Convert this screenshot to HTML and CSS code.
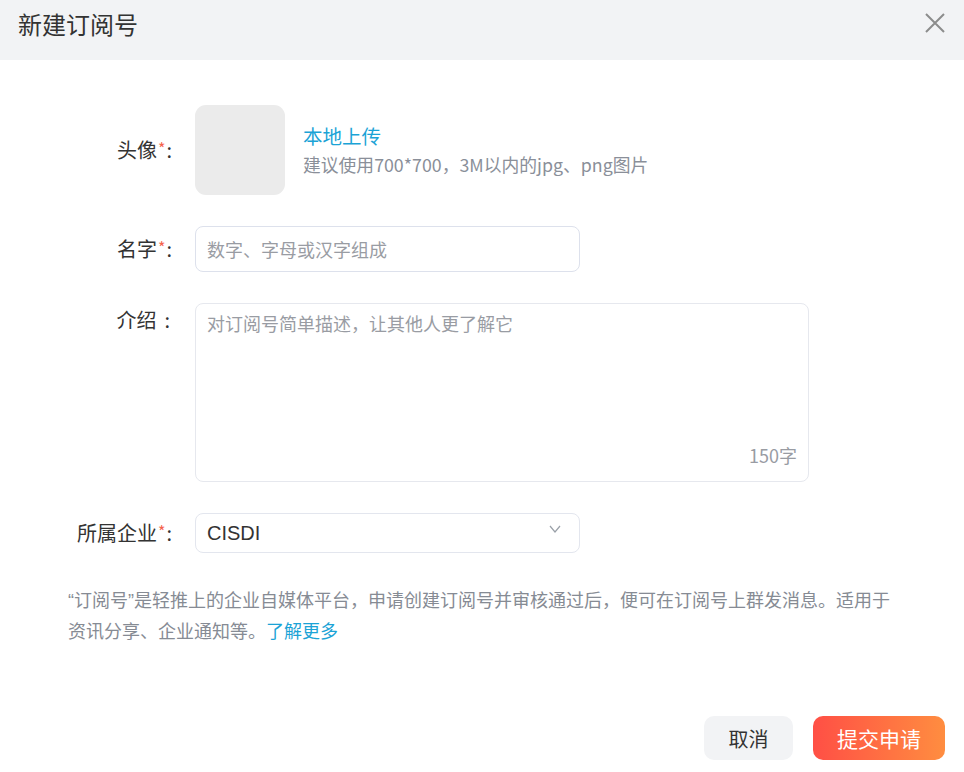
FILE: index.html
```html
<!DOCTYPE html>
<html lang="zh-CN">
<head>
<meta charset="utf-8">
<title>新建订阅号</title>
<link rel="stylesheet" href="styles.css">
</head>
<body>
<div class="dialog">
  <div class="header">
    <div class="title">新建订阅号</div>
    <button class="close" aria-label="关闭">
      <svg width="20" height="20" viewBox="0 0 20 20"><path d="M1 1 L19 19 M19 1 L1 19" stroke="#8c8c8c" stroke-width="2" fill="none"/></svg>
    </button>
  </div>
  <div class="body">
    <div class="row row-center">
      <div class="label">头像<span class="req">*</span>:</div>
      <div class="field avatar-field">
        <div class="avatar"></div>
        <div class="upload">
          <a class="link upload-link">本地上传</a>
          <div class="hint">建议使用700*700，3M以内的jpg、png图片</div>
        </div>
      </div>
    </div>
    <div class="row row-center">
      <div class="label">名字<span class="req">*</span>:</div>
      <div class="field">
        <div class="input name-input"><span class="placeholder">数字、字母或汉字组成</span></div>
      </div>
    </div>
    <div class="row row-top">
      <div class="label label-top">介绍<span class="colon">:</span></div>
      <div class="field">
        <div class="textarea">
          <span class="placeholder">对订阅号简单描述，让其他人更了解它</span>
          <span class="count">150字</span>
        </div>
      </div>
    </div>
    <div class="row row-center">
      <div class="label">所属企业<span class="req">*</span>:</div>
      <div class="field">
        <div class="select">
          <span class="value">CISDI</span>
          <svg width="12" height="8" viewBox="0 0 12 8"><path d="M1 1 L6 7 L11 1" stroke="#9aa0a8" stroke-width="1.2" fill="none"/></svg>
        </div>
      </div>
    </div>
    <p class="info">“订阅号”是轻推上的企业自媒体平台，申请创建订阅号并审核通过后，便可在订阅号上群发消息。适用于资讯分享、企业通知等。<a class="link">了解更多</a></p>
  </div>
  <div class="footer">
    <button class="btn btn-cancel">取消</button>
    <button class="btn btn-submit">提交申请</button>
  </div>
</div>
</body>
</html>
```
FILE: styles.css
```css
* { box-sizing: border-box; }
html, body { margin: 0; padding: 0; background: #fff; }
body {
  font-family: "Noto Sans CJK SC", "Liberation Sans", sans-serif;
  color: #333;
  width: 964px;
  height: 772px;
  overflow: hidden;
}
.dialog { width: 964px; }
.header {
  height: 60px;
  background: #f2f3f5;
  display: flex;
  align-items: center;
  justify-content: space-between;
  padding: 0 19px 0 18px;
}
.title { font-size: 24px; color: #333; margin-top: -12px; line-height: 32px; }
.close {
  border: 0; background: none; padding: 0; width: 20px; height: 20px;
  margin-top: -15px; cursor: pointer; display: flex;
}
.body { padding: 45px 0 0 0; }
.row {
  display: grid;
  grid-template-columns: 172px auto;
  column-gap: 23px;
  margin-bottom: 31px;
}
.row-center { align-items: center; }
.row-top { align-items: start; }
.label {
  text-align: right;
  font-size: 20px;
  color: #333;
  line-height: 26px;
}
.label-top { padding-top: 4px; }
.colon { margin-left: 8px; margin-right: 2px; }
.req { color: #f5624d; font-size: 16px; position: relative; top: -3px; margin: 0 1px 0 1px; }
.field { display: flex; }
.avatar-field { align-items: center; gap: 18px; }
.avatar {
  width: 90px; height: 90px; border-radius: 11px; background: #ebebeb;
}
.upload { display: flex; flex-direction: column; margin-top: 2px; }
.link { color: #1ba3d6; text-decoration: none; cursor: pointer; }
.upload-link { font-size: 19.5px; line-height: 26px; }
.hint { font-size: 17.8px; color: #8a8f99; line-height: 30px; }
.input {
  width: 385px; height: 46px;
  border: 1px solid #dde1ec; border-radius: 8px;
  padding: 0 11px; display: flex; align-items: center;
}
.placeholder { color: #999ca3; font-size: 18px; }
.textarea {
  width: 614px; height: 179px;
  border: 1px solid #e6e8ee; border-radius: 8px;
  padding: 6px 11px; position: relative;
}
.count {
  position: absolute; right: 11px; bottom: 13px;
  font-size: 18px; color: #999ca3;
}
.select {
  width: 385px; height: 40px;
  border: 1px solid #e3e6ee; border-radius: 8px;
  padding: 0 18px 0 11px;
  display: flex; align-items: center; justify-content: space-between;
}
.select svg { margin-top: -8px; }
.value { font-size: 20px; color: #333; font-family: "Liberation Sans", "Noto Sans CJK SC", sans-serif; }
.row:last-of-type { margin-bottom: 0; }
.info {
  margin: 33px 0 0 68px;
  width: 826px;
  font-family: "Liberation Sans", "Noto Sans CJK SC", sans-serif;
  font-size: 18px;
  line-height: 31px;
  color: #868b94;
}
.footer {
  display: flex; justify-content: flex-end; gap: 20px;
  padding: 68px 19px 0 0;
}
.btn {
  height: 44px; border: 0; border-radius: 10px;
  font-family: "Noto Sans CJK SC", sans-serif; font-size: 20px; cursor: pointer;
}
.btn-cancel { width: 89px; background: #f2f3f5; color: #333; }
.btn-submit {
  width: 132px; color: #fff; font-size: 21px;
  background: linear-gradient(90deg, #ff4f45, #ff8d40);
}
```
